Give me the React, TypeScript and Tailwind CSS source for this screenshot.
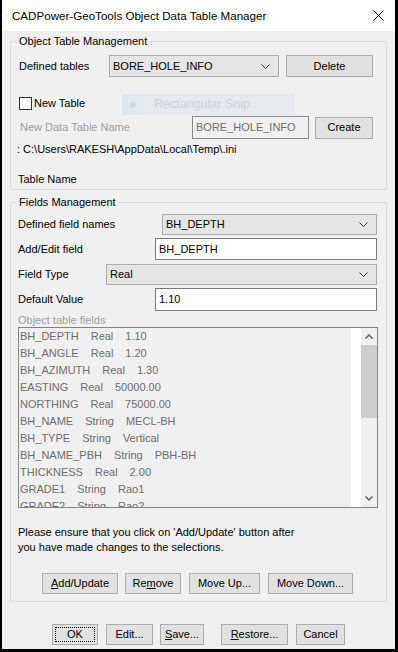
import React from 'react';

const fields = [
  ['BH_DEPTH', 'Real', '1.10'],
  ['BH_ANGLE', 'Real', '1.20'],
  ['BH_AZIMUTH', 'Real', '1.30'],
  ['EASTING', 'Real', '50000.00'],
  ['NORTHING', 'Real', '75000.00'],
  ['BH_NAME', 'String', 'MECL-BH'],
  ['BH_TYPE', 'String', 'Vertical'],
  ['BH_NAME_PBH', 'String', 'PBH-BH'],
  ['THICKNESS', 'Real', '2.00'],
  ['GRADE1', 'String', 'Rao1'],
  ['GRADE2', 'String', 'Rao2'],
];

const Chevron = () => (
  <svg width="9" height="5" viewBox="0 0 9 5" className="shrink-0">
    <polyline points="0.5,0.5 4.5,4.5 8.5,0.5" fill="none" stroke="#333" strokeWidth="1" />
  </svg>
);

const Btn = ({ className = '', children }: { className?: string; children: React.ReactNode }) => (
  <div className={`h-[21px] bg-[#e1e1e1] border border-[#adadad] flex items-center justify-center shrink-0 ${className}`}>
    {children}
  </div>
);

const Combo = ({ className = '', value }: { className?: string; value: string }) => (
  <div className={`bg-[#e5e5e5] border border-[#adadad] flex items-center justify-between pl-[3px] pr-[8px] shrink-0 ${className}`}>
    <span>{value}</span>
    <Chevron />
  </div>
);

const GroupBox = ({ title, className = '', children }: { title: string; className?: string; children: React.ReactNode }) => (
  <div className={`relative mx-[8px] border border-[#dcdcdc] flex flex-col ${className}`}>
    <span className="absolute -top-[7px] left-[6px] px-[2px] bg-[#f0f0f0] leading-[13px]">{title}</span>
    {children}
  </div>
);

export default function App() {
  return (
    <div className="w-[398px] h-[652px] bg-black flex font-['Liberation_Sans',Arial,sans-serif] text-[11px] leading-[13px] text-black">
      <div className="ml-[2px] w-[393px] h-[649px] bg-[#f0f0f0] flex flex-col">
        {/* Title bar */}
        <div className="h-[31px] bg-white flex items-center justify-between pl-[10px] pr-[11px] shrink-0">
          <span className="text-[11.6px]">CADPower-GeoTools Object Data Table Manager</span>
          <svg width="11" height="11" viewBox="0 0 11 11">
            <path d="M0.5 0.5 L10.5 10.5 M10.5 0.5 L0.5 10.5" stroke="#111" strokeWidth="1" />
          </svg>
        </div>

        {/* Object Table Management */}
        <GroupBox title="Object Table Management" className="mt-[10px] h-[149px] pl-[8px]">
          <div className="mt-[13px] h-[22px] flex items-center">
            <span className="w-[90px] shrink-0">Defined tables</span>
            <Combo className="w-[170px] h-[22px]" value="BORE_HOLE_INFO" />
            <Btn className="ml-[7px] w-[87px] h-[22px]">Delete</Btn>
          </div>

          <div className="relative mt-[16px] h-[20px] flex items-center gap-[2px]">
            <div className="w-[13px] h-[13px] bg-white border border-[#333] shrink-0" />
            <span>New Table</span>
            <div className="absolute left-[103px] top-[1px] w-[173px] h-[21px] flex bg-[#e6eaef]">
              <div className="w-[22px] h-full bg-[#e2e8f0] flex items-center justify-center">
                <div className="w-[6px] h-[6px] rounded-full bg-[#d4d9df]" />
              </div>
              <span className="ml-[10px] self-center text-[12.5px] text-[#ced3d9]">Rectangular Snip</span>
            </div>
          </div>

          <div className="mt-[3px] h-[23px] flex items-center">
            <span className="w-[173px] pl-[1px] shrink-0 text-[#a0a0a0]">New Data Table Name</span>
            <div className="w-[117px] h-[23px] border border-[#8a8a8a] flex items-center pl-[3px] text-[#6d6d6d] shrink-0">
              BORE_HOLE_INFO
            </div>
            <Btn className="ml-[6px] w-[58px] h-[22px]">Create</Btn>
          </div>

          <div className="mt-[4px] -ml-[2px]">: C:\Users\RAKESH\AppData\Local\Temp\.ini</div>
          <div className="mt-[17px] -ml-[1px]">Table Name</div>
        </GroupBox>

        {/* Fields Management */}
        <GroupBox title="Fields Management" className="mt-[12px] h-[400px] pl-[7px]">
          <div className="mt-[11px] h-[21px] flex items-center">
            <span className="w-[144px] shrink-0">Defined field names</span>
            <Combo className="w-[215px] h-[21px]" value="BH_DEPTH" />
          </div>
          <div className="mt-[3px] h-[22px] flex items-center">
            <span className="w-[137px] shrink-0">Add/Edit field</span>
            <div className="w-[222px] h-[22px] bg-white border border-[#7a7a7a] flex items-center pl-[3px] shrink-0">BH_DEPTH</div>
          </div>
          <div className="mt-[4px] h-[21px] flex items-center">
            <span className="w-[88px] shrink-0">Field Type</span>
            <Combo className="w-[271px] h-[21px]" value="Real" />
          </div>
          <div className="mt-[3px] h-[23px] flex items-center">
            <span className="w-[137px] shrink-0">Default Value</span>
            <div className="w-[222px] h-[23px] bg-white border border-[#7a7a7a] flex items-center pl-[3px] shrink-0">1.10</div>
          </div>
          <div className="mt-[3px] text-[#a0a0a0]">Object table fields</div>

          <div className="w-[360px] h-[181px] border border-[#828282] flex shrink-0">
            <div className="flex-1 overflow-hidden pl-[1px] text-[#6d6d6d]">
              {fields.map(([name, type, val]) => (
                <div key={name} className="h-[17px] flex items-center gap-[12px] whitespace-nowrap">
                  <span>{name}</span>
                  <span>{type}</span>
                  <span>{val}</span>
                </div>
              ))}
            </div>
            <div className="w-[10px] bg-white" />
            <div className="w-[16px] flex flex-col bg-[#f0f0f0]">
              <div className="h-[17px] flex items-center justify-center">
                <svg width="8" height="5" viewBox="0 0 8 5">
                  <polyline points="0.5,4.5 4,1 7.5,4.5" fill="none" stroke="#606060" strokeWidth="1.5" />
                </svg>
              </div>
              <div className="h-[73px] bg-[#cdcdcd]" />
              <div className="flex-1" />
              <div className="h-[17px] flex items-center justify-center">
                <svg width="8" height="5" viewBox="0 0 8 5">
                  <polyline points="0.5,0.5 4,4 7.5,0.5" fill="none" stroke="#606060" strokeWidth="1.5" />
                </svg>
              </div>
            </div>
          </div>

          <div className="mt-[17px] leading-[15px]">
            <div>Please ensure that you click on 'Add/Update' button after</div>
            <div>you have made changes to the selections.</div>
          </div>

          <div className="mt-[18px] ml-[24px] flex">
            <Btn className="w-[76px]">
              <span><span className="underline">A</span>dd/Update</span>
            </Btn>
            <Btn className="ml-[7px] w-[56px]">
              <span>Re<span className="underline">m</span>ove</span>
            </Btn>
            <Btn className="ml-[8px] w-[71px]">Move Up...</Btn>
            <Btn className="ml-[8px] w-[85px]">Move Down...</Btn>
          </div>
        </GroupBox>

        {/* Dialog buttons */}
        <div className="mt-[22px] ml-[50px] flex">
          <Btn className="w-[46px] p-[2px]">
            <span className="w-full h-full border border-dotted border-black flex items-center justify-center">OK</span>
          </Btn>
          <Btn className="ml-[8px] w-[47px]">Edit...</Btn>
          <Btn className="ml-[7px] w-[44px]">
            <span><span className="underline">S</span>ave...</span>
          </Btn>
          <Btn className="ml-[17px] w-[67px]">
            <span><span className="underline">R</span>estore...</span>
          </Btn>
          <Btn className="ml-[8px] w-[49px]">Cancel</Btn>
        </div>
      </div>
    </div>
  );
}
